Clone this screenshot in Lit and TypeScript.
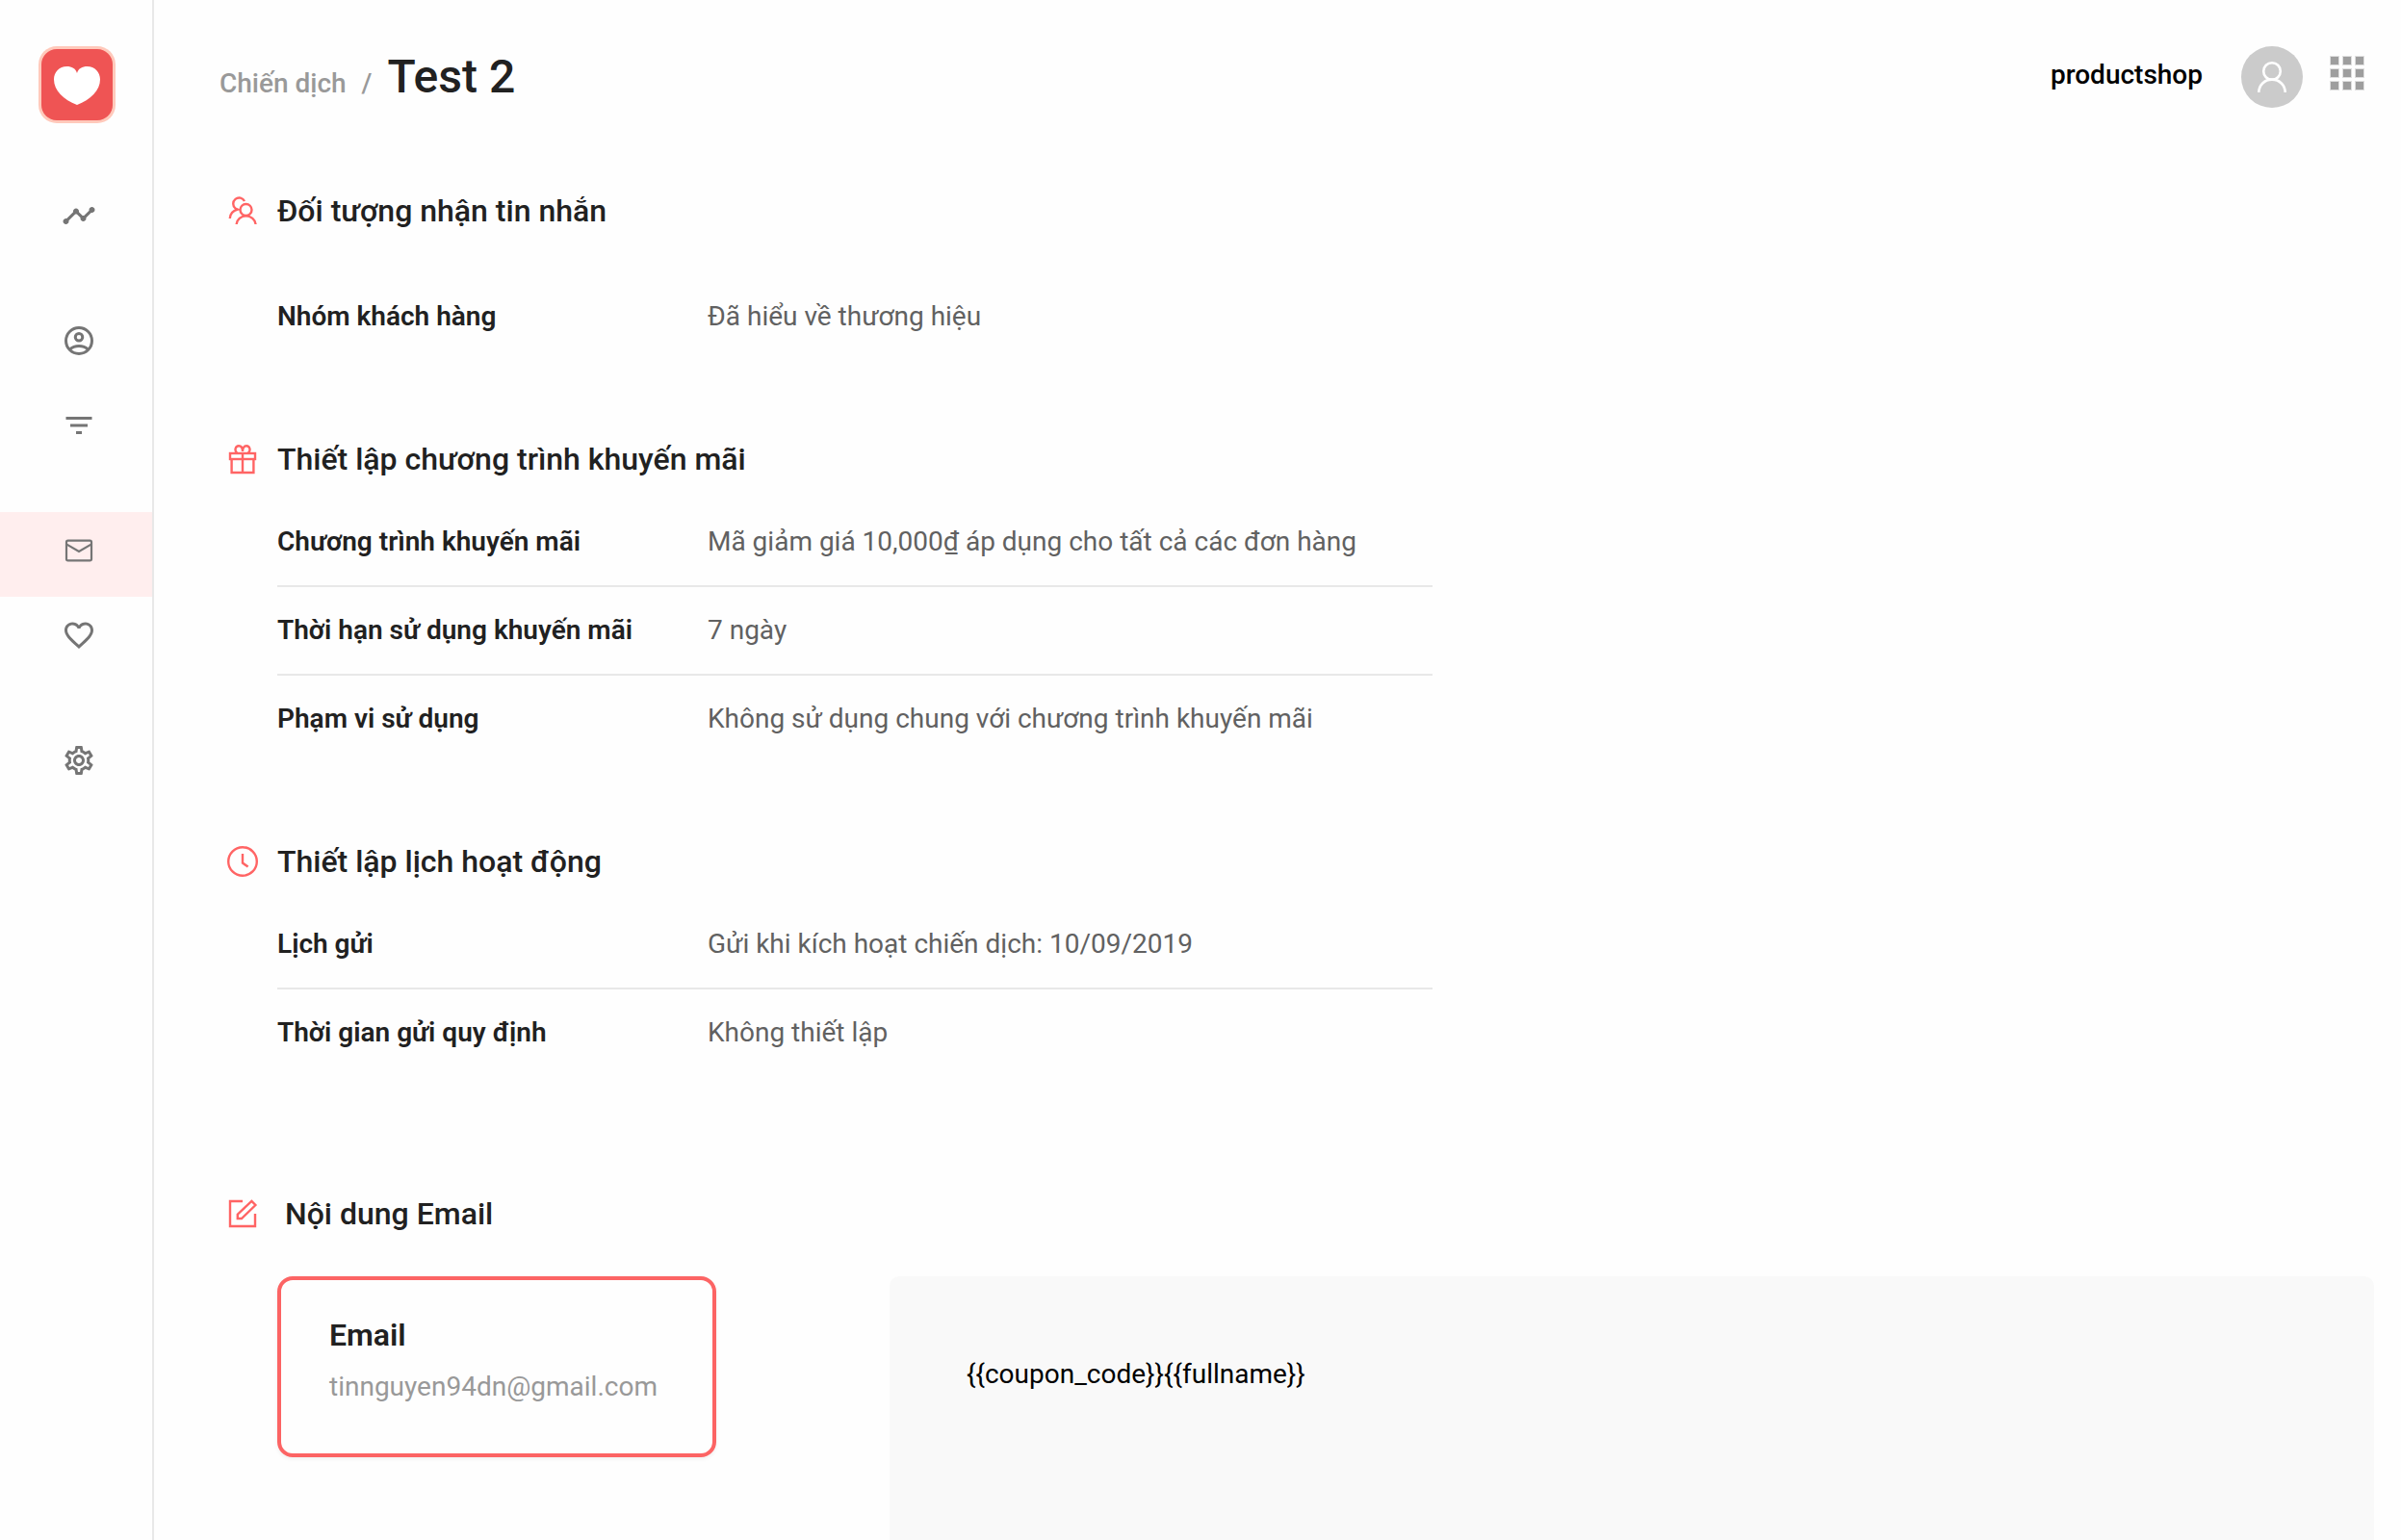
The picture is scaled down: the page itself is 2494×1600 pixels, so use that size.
import { LitElement, html, css, svg, TemplateResult } from "lit";
import { customElement } from "lit/decorators.js";
import { classMap } from "lit/directives/class-map.js";

interface NavItem {
  label: string;
  icon: TemplateResult;
  active?: boolean;
}

interface Row {
  label: string;
  value: string;
}

interface Section {
  title: string;
  icon: TemplateResult;
  rows: Row[];
  spacious?: boolean;
}

const material = (d: string) =>
  svg`<svg viewBox="0 0 24 24" width="36" height="36" fill="currentColor" aria-hidden="true"><path d=${d}></path></svg>`;

const line = (body: TemplateResult) =>
  svg`<svg viewBox="0 0 32 32" width="32" height="32" fill="none" stroke="currentColor" stroke-width="2.4" aria-hidden="true">${body}</svg>`;

const mailIcon = svg`<svg viewBox="0 0 36 36" width="36" height="36" fill="none" stroke="currentColor" stroke-width="2.2" aria-hidden="true">
  <rect x="5" y="7.6" width="26" height="20.8" rx="1.6"></rect>
  <path d="M5.4 11.6 18 19l12.600-7.400"></path>
</svg>`;

const navGroups: NavItem[][] = [
  [
    {
      label: "Thống kê",
      icon: material(
        "M23 8c0 1.1-.9 2-2 2-.18 0-.35-.02-.51-.07l-3.56 3.55c.05.16.07.34.07.52 0 1.1-.9 2-2 2s-2-.9-2-2c0-.18.02-.36.07-.52l-2.550-2.550c-.16.05-.34.07-.52.07s-.36-.02-.52-.07l-4.550 4.560c.05.16.07.33.07.51 0 1.100-.9 2-2 2s-2-.9-2-2 .9-2 2-2c.18 0 .35.02.51.07l4.560-4.550C8.020 9.360 8 9.180 8 9c0-1.100.9-2 2-2s2 .9 2 2c0 .18-.02.36-.07.52l2.550 2.550c.16-.05.34-.07.52-.07s.36.02.52.07l3.550-3.560C19.020 8.350 19 8.180 19 8c0-1.100.9-2 2-2s2 .9 2 2z"
      ),
    },
  ],
  [
    {
      label: "Khách hàng",
      icon: svg`<svg viewBox="0 0 24 24" width="36" height="36" fill="none" stroke="currentColor" stroke-width="2" aria-hidden="true">
        <circle cx="12" cy="12" r="9"></circle>
        <circle cx="12" cy="9.500" r="2.500"></circle>
        <path d="M5.600 18c1.700-1.500 4-2.300 6.400-2.300s4.700.8 6.400 2.300"></path>
      </svg>`,
    },
    { label: "Bộ lọc", icon: material("M10 18h4v-2h-4v2zM3 6v2h18V6H3zm3 7h12v-2H6v2z") },
  ],
  [
    { label: "Chiến dịch", icon: mailIcon, active: true },
    {
      label: "Yêu thích",
      icon: material(
        "M16.500 3c-1.740 0-3.410.81-4.500 2.090C10.910 3.810 9.240 3 7.500 3 4.420 3 2 5.420 2 8.500c0 3.780 3.400 6.860 8.550 11.540L12 21.350l1.450-1.320C18.600 15.360 22 12.280 22 8.500 22 5.420 19.580 3 16.500 3zm-4.400 15.550l-.1.1-.1-.1C7.140 14.240 4 11.390 4 8.500 4 6.500 5.500 5 7.500 5c1.540 0 3.040.99 3.570 2.360h1.870C13.460 5.990 14.960 5 16.500 5c2 0 3.500 1.500 3.500 3.500 0 2.890-3.140 5.740-7.900 10.050z"
      ),
    },
  ],
  [
    {
      label: "Cài đặt",
      icon: material(
        "M19.430 12.980c.04-.32.07-.64.07-.98 0-.34-.03-.66-.07-.98l2.110-1.650c.19-.15.24-.42.12-.64l-2-3.460c-.09-.16-.26-.25-.44-.25-.06 0-.12.01-.17.03l-2.490 1c-.52-.4-1.080-.73-1.690-.98l-.38-2.650C14.460 2.180 14.250 2 14 2h-4c-.25 0-.46.18-.49.42l-.38 2.650c-.61.25-1.170.59-1.690.98l-2.490-1c-.06-.02-.12-.03-.18-.03-.17 0-.34.09-.43.25l-2 3.460c-.13.22-.07.49.12.64l2.110 1.650c-.04.32-.07.65-.07.98 0 .33.03.66.07.98l-2.110 1.650c-.19.15-.24.42-.12.64l2 3.460c.09.16.26.25.44.25.06 0 .12-.01.17-.03l2.490-1c.52.4 1.080.73 1.690.98l.38 2.650c.03.24.24.42.49.42h4c.25 0 .46-.18.49-.42l.38-2.650c.61-.25 1.170-.59 1.690-.98l2.490 1c.06.02.12.03.18.03.17 0 .34-.09.43-.25l2-3.460c.12-.22.07-.49-.12-.64l-2.110-1.650zm-1.980-1.710c.04.31.05.52.05.73 0 .21-.02.43-.05.73l-.14 1.130.89.7 1.080.84-.7 1.210-1.270-.51-1.040-.42-.9.68c-.43.32-.84.56-1.250.73l-1.060.43-.16 1.130-.2 1.350h-1.400l-.19-1.350-.16-1.130-1.060-.43c-.43-.18-.83-.41-1.230-.71l-.91-.7-1.060.43-1.270.51-.7-1.210 1.080-.84.89-.7-.14-1.130c-.03-.31-.05-.54-.05-.74s.02-.43.05-.73l.14-1.130-.89-.7-1.080-.84.7-1.210 1.270.51 1.040.42.9-.68c.43-.32.84-.56 1.250-.73l1.060-.43.16-1.130.2-1.350h1.390l.19 1.350.16 1.130 1.060.43c.43.18.83.41 1.230.71l.91.7 1.060-.43 1.270-.51.7 1.210-1.070.85-.89.7.14 1.130zM12 8c-2.210 0-4 1.790-4 4s1.790 4 4 4 4-1.790 4-4-1.790-4-4-4zm0 6c-1.100 0-2-.9-2-2s.9-2 2-2 2 .9 2 2-.9 2-2 2z"
      ),
    },
  ],
];

const peopleIcon = line(svg`
  <circle cx="19.500" cy="15" r="6"></circle>
  <path d="M9.600 30c.4-5 4.700-8.600 9.900-8.600s9.700 3.600 10.100 8.600"></path>
  <path d="M18 6A6.200 6.200 0 1 0 8.600 13.600L10.800 14.600C6.400 15.700 3 19.200 2.800 24"></path>`);

const giftIcon = line(svg`
  <rect x="3" y="10" width="26" height="6"></rect>
  <path d="M4.600 16v14h22.800V16M16 10v20"></path>
  <path d="M10.500 10C6.800 7 8.800 2.200 12 2.200c2.600 0 4 2.600 4 5.800 0-3.200 1.400-5.800 4-5.800 3.200 0 5.200 4.800 1.500 7.800"></path>`);

const clockIcon = line(svg`
  <circle cx="16" cy="16" r="14.800"></circle>
  <path d="M16 8v9.600l5.600 4"></path>`);

const editIcon = line(svg`
  <path d="M16 3H3v26h26V16"></path>
  <path d="M10.800 21v-4.300L25.400 2.900l4 4.100L15 21z"></path>`);

const sections: Section[] = [
  {
    title: "Đối tượng nhận tin nhắn",
    icon: peopleIcon,
    spacious: true,
    rows: [{ label: "Nhóm khách hàng", value: "Đã hiểu về thương hiệu" }],
  },
  {
    title: "Thiết lập chương trình khuyến mãi",
    icon: giftIcon,
    rows: [
      { label: "Chương trình khuyến mãi", value: "Mã giảm giá 10,000₫ áp dụng cho tất cả các đơn hàng" },
      { label: "Thời hạn sử dụng khuyến mãi", value: "7 ngày" },
      { label: "Phạm vi sử dụng", value: "Không sử dụng chung với chương trình khuyến mãi" },
    ],
  },
  {
    title: "Thiết lập lịch hoạt động",
    icon: clockIcon,
    rows: [
      { label: "Lịch gửi", value: "Gửi khi kích hoạt chiến dịch: 10/09/2019" },
      { label: "Thời gian gửi quy định", value: "Không thiết lập" },
    ],
  },
];

@customElement("app-sidebar")
class AppSidebar extends LitElement {
  static styles = css`
    :host {
      display: block;
      box-sizing: border-box;
      width: 160px;
      padding-top: 48px;
      border-right: 2px solid #e8e8e8;
    }
    .logo {
      display: block;
      width: 80px;
      height: 80px;
      margin: 0 0 56px 40px;
    }
    .nav {
      display: flex;
      flex-direction: column;
      gap: 42px;
    }
    .group {
      display: flex;
      flex-direction: column;
    }
    .item {
      display: block;
      box-sizing: border-box;
      height: 88px;
      padding: 22px 0 0 64px;
      color: #757575;
    }
    .item.active {
      background: #ffeeee;
    }
    svg {
      display: block;
    }
  `;

  render() {
    return html`
      <a class="logo" href="#" aria-label="Trang chủ">
        <svg viewBox="0 0 80 80" width="80" height="80" aria-hidden="true">
          <rect width="80" height="80" rx="19" fill="#ffc9bb"></rect>
          <rect x="3" y="3" width="74" height="74" rx="16" fill="#ef5454"></rect>
          <path
            fill="#fff"
            d="M40 28C38.500 23 34.500 21 29.500 21 21.500 21 16 27 16 34.500 16 46 26 55.500 40 61 54 55.500 64 46 64 34.500 64 27 58.500 21 50.500 21 45.500 21 41.500 23 40 28z"
          ></path>
        </svg>
      </a>
      <nav class="nav">
        ${navGroups.map(
          (group) => html`<div class="group">
            ${group.map(
              (item) => html`<a
                href="#"
                aria-label=${item.label}
                class=${classMap({ item: true, active: !!item.active })}
                >${item.icon}</a
              >`
            )}
          </div>`
        )}
      </nav>
    `;
  }
}

@customElement("app-root")
class AppRoot extends LitElement {
  static styles = css`
    :host {
      display: flex;
      min-height: 100vh;
      background: #fefefe;
      color: #212121;
      font-family: Roboto, "Noto Sans", sans-serif;
      font-size: 28px;
    }
    svg {
      display: block;
    }
    button {
      padding: 0;
      border: 0;
      background: none;
      font: inherit;
      color: inherit;
      text-align: left;
      cursor: pointer;
    }
    h1,
    h2,
    p,
    dl,
    dt,
    dd {
      margin: 0;
    }
    .main {
      flex: 1;
      display: flex;
      flex-direction: column;
      gap: 78px;
      min-width: 0;
      padding: 48px 28px 0 68px;
    }
    .header {
      display: flex;
      align-items: flex-start;
      justify-content: space-between;
      height: 64px;
      padding-right: 10px;
      margin-bottom: 4px;
    }
    .crumbs {
      display: flex;
      align-items: baseline;
      gap: 16px;
      font-weight: 500;
      line-height: 64px;
      color: #999;
    }
    .crumbs a {
      color: inherit;
      text-decoration: none;
    }
    .title {
      font-size: 48px;
      font-weight: 500;
      color: #212121;
    }
    .account {
      display: flex;
      align-items: center;
    }
    .shop {
      margin-right: 40px;
      line-height: 60px;
      padding-bottom: 4px;
      font-weight: 500;
      color: #000;
    }
    .avatar {
      margin-right: 28px;
    }
    .apps {
      padding-bottom: 8px;
    }
    .heading {
      display: flex;
      align-items: center;
      gap: 20px;
      height: 50px;
      padding-left: 8px;
    }
    .heading svg {
      color: #ff6464;
    }
    .heading h2 {
      font-size: 32px;
      font-weight: 500;
      line-height: 50px;
    }
    .rows {
      max-width: 1200px;
      margin: 16px 0 0 60px;
    }
    .rows.spacious {
      margin-top: 40px;
    }
    .row {
      display: grid;
      grid-template-columns: 447px 1fr;
      line-height: 90px;
      border-bottom: 2px solid #e8e8e8;
    }
    .row:last-child {
      border-bottom: 0;
    }
    .row dt {
      font-weight: 600;
    }
    .row dd {
      color: #616161;
    }
    .content {
      flex: 1;
      display: flex;
      flex-direction: column;
      margin-top: 40px;
    }
    .content .heading {
      gap: 28px;
    }
    .preview {
      flex: 1;
      display: flex;
      align-items: stretch;
      gap: 180px;
      margin: 40px 0 0 60px;
    }
    .card {
      align-self: flex-start;
      flex: none;
      box-sizing: border-box;
      width: 456px;
      padding: 32px 50px 40px;
      border: 4px solid #fc6464;
      border-radius: 16px;
      box-shadow: 0 2px 4px rgba(0, 0, 0, 0.06);
    }
    .card .name {
      display: block;
      font-size: 32px;
      font-weight: 600;
      line-height: 50px;
      color: #212121;
    }
    .card .address {
      display: block;
      line-height: 58px;
      color: #999;
    }
    .panel {
      flex: 1;
      min-height: 194px;
      padding: 82px 80px 0;
      border-radius: 10px 10px 0 0;
      background: #f9f9f9;
      color: #000;
      line-height: 40px;
    }
  `;

  private renderSection(section: Section) {
    return html`<section>
      <div class="heading">${section.icon}<h2>${section.title}</h2></div>
      <dl class=${classMap({ rows: true, spacious: !!section.spacious })}>
        ${section.rows.map(
          (row) => html`<div class="row"><dt>${row.label}</dt><dd>${row.value}</dd></div>`
        )}
      </dl>
    </section>`;
  }

  private renderAppsIcon() {
    const steps = [0, 13, 26];
    return html`<svg viewBox="0 0 36 36" width="36" height="36" aria-hidden="true">
      ${steps.map((y) =>
        steps.map(
          (x) => svg`
            <rect x=${x} y=${y} width="10" height="10" fill="#dedede"></rect>
            <rect x=${x + 1} y=${y + 1} width="8" height="8" fill="#9e9e9e"></rect>`
        )
      )}
    </svg>`;
  }

  render() {
    return html`
      <app-sidebar></app-sidebar>
      <main class="main">
        <header class="header">
          <div class="crumbs">
            <a href="#">Chiến dịch</a>
            <span>/</span>
            <h1 class="title">Test 2</h1>
          </div>
          <div class="account">
            <span class="shop">productshop</span>
            <button class="avatar" type="button" aria-label="Tài khoản">
              <svg viewBox="0 0 64 64" width="64" height="64" fill="none" stroke="#fff" stroke-width="2.600" aria-hidden="true">
                <circle cx="32" cy="32" r="32" fill="#cbcbcb" stroke="none"></circle>
                <circle cx="32" cy="26" r="8.800"></circle>
                <path d="M18.300 48c0-7.600 6.100-13.400 13.700-13.400S45.700 40.400 45.700 48"></path>
              </svg>
            </button>
            <button class="apps" type="button" aria-label="Ứng dụng">${this.renderAppsIcon()}</button>
          </div>
        </header>
        ${sections.map((section) => this.renderSection(section))}
        <section class="content">
          <div class="heading">${editIcon}<h2>Nội dung Email</h2></div>
          <div class="preview">
            <button class="card" type="button">
              <span class="name">Email</span>
              <span class="address">tinnguyen94dn@gmail.com</span>
            </button>
            <div class="panel"><p>{{coupon_code}}{{fullname}}</p></div>
          </div>
        </section>
      </main>
    `;
  }
}
